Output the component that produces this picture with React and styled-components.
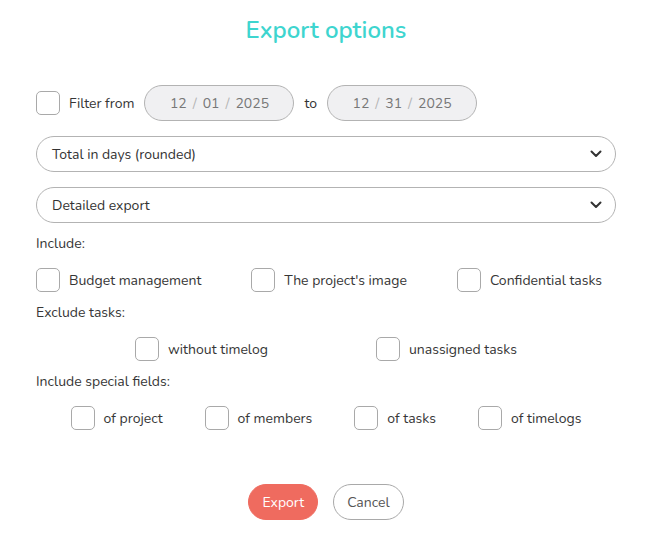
import React from 'react';
import styled, { createGlobalStyle } from 'styled-components';

const Global = createGlobalStyle`
  body {
    margin: 0;
    background: #fff;
    font-family: "Nunito", "Noto Sans", sans-serif;
    color: #333;
  }
`;

const Page = styled.div`
  width: 652px;
  box-sizing: border-box;
  padding: 15px 36px 0;
`;

const Title = styled.h2`
  margin: 0;
  text-align: center;
  font-size: 24px;
  font-weight: 600;
  color: #3ed5cf;
  line-height: 30px;
`;

const FilterRow = styled.div`
  display: flex;
  align-items: center;
  margin-top: 40px;
  height: 36px;
`;

const Box = styled.span`
  width: 22px;
  height: 22px;
  border: 1px solid #a9a9a9;
  border-radius: 5px;
  flex-shrink: 0;
  box-sizing: content-box;
`;

const Label = styled.label`
  display: flex;
  align-items: center;
  gap: 9px;
  font-size: 14px;
  color: #363636;
  white-space: nowrap;
`;

const DateField = styled.div`
  width: 148px;
  height: 34px;
  border: 1px solid #b3b3b3;
  border-radius: 18px;
  background: #f0f0f2;
  display: flex;
  align-items: center;
  justify-content: center;
  gap: 6px;
  font-size: 14px;
  color: #777;
  margin-left: ${p => p.$ml || 0}px;
`;

const Slash = styled.span`
  color: #b5b5b5;
`;

const To = styled.span`
  font-size: 14px;
  margin-left: 10px;
`;

const Select = styled.div`
  margin-top: ${p => p.$mt}px;
  height: 34px;
  border: 1px solid #b3b3b3;
  border-radius: 18px;
  display: flex;
  align-items: center;
  justify-content: space-between;
  padding: 0 12px 0 15px;
  font-size: 14px;
  color: #333;
`;

const Heading = styled.div`
  font-size: 14px;
  color: #363636;
  margin-top: ${p => p.$mt}px;
  line-height: 20px;
`;

const CheckRow = styled.div`
  display: flex;
  align-items: center;
  justify-content: ${p => p.$justify || 'flex-start'};
  gap: ${p => p.$gap}px;
  margin-top: ${p => p.$mt}px;
  height: 24px;
`;

const Actions = styled.div`
  display: flex;
  justify-content: center;
  gap: 15px;
  margin-top: 54px;
`;

const Button = styled.button`
  height: 36px;
  padding: 0 13px;
  border-radius: 18px;
  font-family: inherit;
  font-size: 14px;
  cursor: pointer;
  border: 1px solid ${p => (p.$primary ? '#ef6b5f' : '#a9a9a9')};
  background: ${p => (p.$primary ? '#ef6b5f' : '#fff')};
  color: ${p => (p.$primary ? '#fff' : '#555')};
`;

const Chevron = () => (
  <svg width="14" height="14" viewBox="0 0 14 14">
    <path d="M2.5 4.5 L7 9 L11.5 4.5" fill="none" stroke="#333" strokeWidth="2" strokeLinecap="round" strokeLinejoin="round" />
  </svg>
);

const Check = ({ children }) => (
  <Label>
    <Box />
    {children}
  </Label>
);

const DateValue = ({ m, d, y }) => (
  <>
    {m} <Slash>/</Slash> {d} <Slash>/</Slash> {y}
  </>
);

export default function App() {
  return (
    <Page>
      <Global />
      <Title>Export options</Title>

      <FilterRow>
        <Check>Filter from</Check>
        <DateField $ml={10}><DateValue m="12" d="01" y="2025" /></DateField>
        <To>to</To>
        <DateField $ml={10}><DateValue m="12" d="31" y="2025" /></DateField>
      </FilterRow>

      <Select $mt={15}>
        <span>Total in days (rounded)</span>
        <Chevron />
      </Select>
      <Select $mt={15}>
        <span>Detailed export</span>
        <Chevron />
      </Select>

      <Heading $mt={11}>Include:</Heading>
      <CheckRow $mt={14} $gap={50}>
        <Check>Budget management</Check>
        <Check>The project's image</Check>
        <Check>Confidential tasks</Check>
      </CheckRow>

      <Heading $mt={11}>Exclude tasks:</Heading>
      <CheckRow $mt={14} $gap={108} $justify="center">
        <Check>without timelog</Check>
        <Check>unassigned tasks</Check>
      </CheckRow>

      <Heading $mt={11}>Include special fields:</Heading>
      <CheckRow $mt={14} $gap={42} $justify="center">
        <Check>of project</Check>
        <Check>of members</Check>
        <Check>of tasks</Check>
        <Check>of timelogs</Check>
      </CheckRow>

      <Actions>
        <Button $primary>Export</Button>
        <Button>Cancel</Button>
      </Actions>
    </Page>
  );
}
